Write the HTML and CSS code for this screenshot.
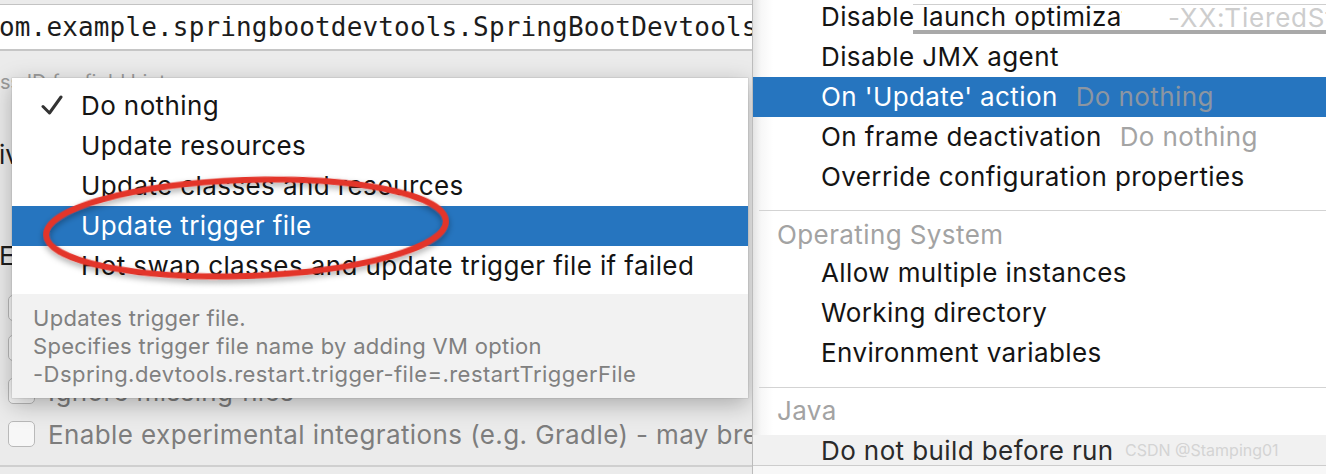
FILE: index.html
```html
<!DOCTYPE html>
<html>
<head>
<meta charset="utf-8">
<link rel="stylesheet" href="styles.css">
</head>
<body>
<div class="screen">
  <div class="left">
    <div class="field">om.example.springbootdevtools.SpringBootDevtoolsApplication</div>
    <div class="form">
      <div class="hint-row">ss ID for field hints</div>
      <div class="label-row">iv</div>
      <div class="label-row e-row">E</div>
      <div class="check-row r1"><span class="box"></span><span class="clabel">Restart on change</span></div>
      <div class="check-row r2"><span class="box"></span><span class="clabel">Live reload</span></div>
      <div class="check-row r3"><span class="box"></span><span class="clabel">Ignore missing files</span></div>
      <div class="check-row r4"><span class="box"></span><span class="clabel">Enable experimental integrations (e.g. Gradle) - may break</span></div>
      <div class="bottom-line"></div>
    </div>

    <div class="popup">
      <ul class="plist">
        <li class="pitem">
          <svg class="check" viewBox="0 0 22 22" width="22" height="22"><path d="M2 12.5 L8.5 19 L20 3" fill="none" stroke="#333" stroke-width="3" stroke-linecap="round" stroke-linejoin="round"/></svg>
          Do nothing
        </li>
        <li class="pitem">Update resources</li>
        <li class="pitem">Update classes and resources</li>
        <li class="pitem sel">Update trigger file</li>
        <li class="pitem">Hot swap classes and update trigger file if failed</li>
      </ul>
      <div class="pfoot">
        <div>Updates trigger file.</div>
        <div>Specifies trigger file name by adding VM option</div>
        <div class="last-line">-Dspring.devtools.restart.trigger-file=.restartTriggerFile</div>
      </div>
    </div>

    <svg class="annot" width="460" height="130" viewBox="0 0 460 130">
      <defs>
        <filter id="sh" x="-10%" y="-20%" width="120%" height="140%">
          <feDropShadow dx="0" dy="3" stdDeviation="3" flood-color="#000" flood-opacity="0.35"/>
        </filter>
      </defs>
      <ellipse cx="226" cy="60" rx="200" ry="48" transform="rotate(-2 226 60)" fill="none" stroke="#e3342a" stroke-width="6" filter="url(#sh)"/>
    </svg>
  </div>

  <div class="right">
    <div class="menu">
      <div class="mitem first">Disable launch optimization</div>
      <div class="mitem">Disable JMX agent</div>
      <div class="mitem sel">On 'Update' action<span class="val">Do nothing</span></div>
      <div class="mitem">On frame deactivation<span class="val">Do nothing</span></div>
      <div class="mitem">Override configuration properties</div>
      <div class="sep s1"></div>
      <div class="mhead h1">Operating System</div>
      <div class="mitem">Allow multiple instances</div>
      <div class="mitem">Working directory</div>
      <div class="mitem">Environment variables</div>
      <div class="sep s2"></div>
      <div class="mhead h2">Java</div>
      <div class="mitem last">Do not build before run<span class="wm">CSDN @Stamping01</span></div>
      <div class="tail"></div>
    </div>
    <div class="glitch"><span>-XX:TieredStopAtLevel</span></div>
  </div>
</div>
</body>
</html>
```

FILE: styles.css
```css
* { box-sizing: border-box; margin: 0; padding: 0; }
html, body { width: 1326px; height: 474px; overflow: hidden; background: #ececec; }
body { font-family: "Inter", "Liberation Sans", sans-serif; }

.screen { display: flex; width: 1326px; height: 474px; }

.left {
  position: relative;
  width: 752px;
  height: 474px;
  overflow: hidden;
  background: #ebebeb;
}

.field {
  margin-top: 4px;
  height: 47px;
  background: #fff;
  border-top: 1px solid #c3c3c3;
  border-bottom: 2px solid #c6c6c6;
  font-family: "DejaVu Sans Mono", "Liberation Mono", monospace;
  font-size: 26px;
  line-height: 44px;
  color: #1c1c1c;
  white-space: nowrap;
  overflow: hidden;
  margin-left: -1px;
  letter-spacing: 0.15px;
}

.form { display: flex; flex-direction: column; }
.hint-row {
  margin-top: 21px;
  height: 20px;
  font-size: 20px;
  line-height: 20px;
  color: #9b9b9b;
}
.label-row {
  height: 30px;
  font-size: 26px;
  line-height: 30px;
  color: #1d1d1d;
  margin-top: 48px;
  margin-left: -1px;
}
.e-row { margin-top: 71px; }

.check-row {
  display: flex;
  align-items: center;
  gap: 13px;
  height: 28px;
  padding-left: 8px;
  font-size: 26px;
  letter-spacing: 0.4px;
  color: #7d7d7d;
  white-space: nowrap;
}
.r1 { margin-top: 23px; }
.r2 { margin-top: 12px; }
.r3 { margin-top: 15px; }
.r4 { margin-top: 15px; }
.box {
  flex: none;
  width: 27px;
  height: 26px;
  border: 1.5px solid #b9b9b9;
  border-radius: 5px;
  background: #f7f7f7;
}
.bottom-line {
  margin-top: 17px;
  height: 2px;
  background: #cfcfcf;
}

.popup {
  position: absolute;
  left: 12px;
  top: 78px;
  width: 736px;
  background: #fff;
  box-shadow: 0 6px 22px rgba(0,0,0,0.28), 0 0 0 0.5px rgba(0,0,0,0.12);
}
.plist { list-style: none; padding: 8px 0; }
.pitem {
  position: relative;
  height: 40px;
  line-height: 40px;
  padding-left: 69px;
  font-size: 26px;
  letter-spacing: 0.4px;
  color: #141414;
  white-space: nowrap;
}
.pitem.sel { background: #2675bf; color: #fff; }
.check { position: absolute; left: 29px; top: 8px; }

.pfoot {
  background: #f2f2f2;
  padding: 10px 0 10px 21px;
  font-size: 22px;
  letter-spacing: 0.3px;
  line-height: 28px;
  color: #808080;
  white-space: nowrap;
}
.pfoot .last-line { letter-spacing: 0.45px; }

.annot { position: absolute; left: 20px; top: 168px; }

.right {
  position: relative;
  flex: 1;
  height: 474px;
  overflow: hidden;
  background: linear-gradient(to right, #e4e4e4 0, #f7f7f7 8px, #fff 20px);
  border-left: 1px solid #bcbcbc;
}
.menu { display: flex; flex-direction: column; }
.mitem {
  height: 40px;
  line-height: 40px;
  padding-left: 68px;
  font-size: 26px;
  letter-spacing: 0.4px;
  color: #141414;
  white-space: nowrap;
}
.mitem.first { margin-top: -3px; }
.mitem.sel { background: #2675bf; color: #fff; }
.val { margin-left: 18px; color: #a4a4a4; }
.mitem.sel .val { color: #8c96a2; }
.sep { height: 1px; background: #d3d3d3; margin-left: 6px; }
.s1 { margin-top: 13px; margin-bottom: 6px; }
.s2 { margin-top: 14px; margin-bottom: 5px; }
.mhead {
  height: 36px;
  line-height: 36px;
  padding-left: 24px;
  font-size: 26px;
  letter-spacing: 0.4px;
  color: #a3a3a3;
}
.mitem.last {
  margin-top: 6px;
  height: 31px;
  line-height: 31px;
  background: #f1f1f1;
  border-bottom: 1px solid #cdcdcd;
  color: #2a2a2a;
  position: relative;
}
.wm {
  position: absolute;
  left: 372px;
  top: 0;
  font-size: 16px;
  letter-spacing: 0;
  color: #d4d4d4;
}
.tail { height: 10px; background: #f7f7f7; }

.glitch {
  position: absolute;
  left: 160px;
  top: 4px;
  right: 0;
  height: 30px;
  border-top: 1px solid #cfcfcf;
  border-bottom: 4px solid #a9a9a9;
  display: flex;
  justify-content: flex-end;
}
.glitch span {
  display: block;
  width: 204px;
  background: #fff;
  padding-left: 46px;
  font-size: 26px;
  line-height: 25px;
  letter-spacing: 0.8px;
  color: #cdcdcd;
  white-space: nowrap;
  overflow: hidden;
}
```
